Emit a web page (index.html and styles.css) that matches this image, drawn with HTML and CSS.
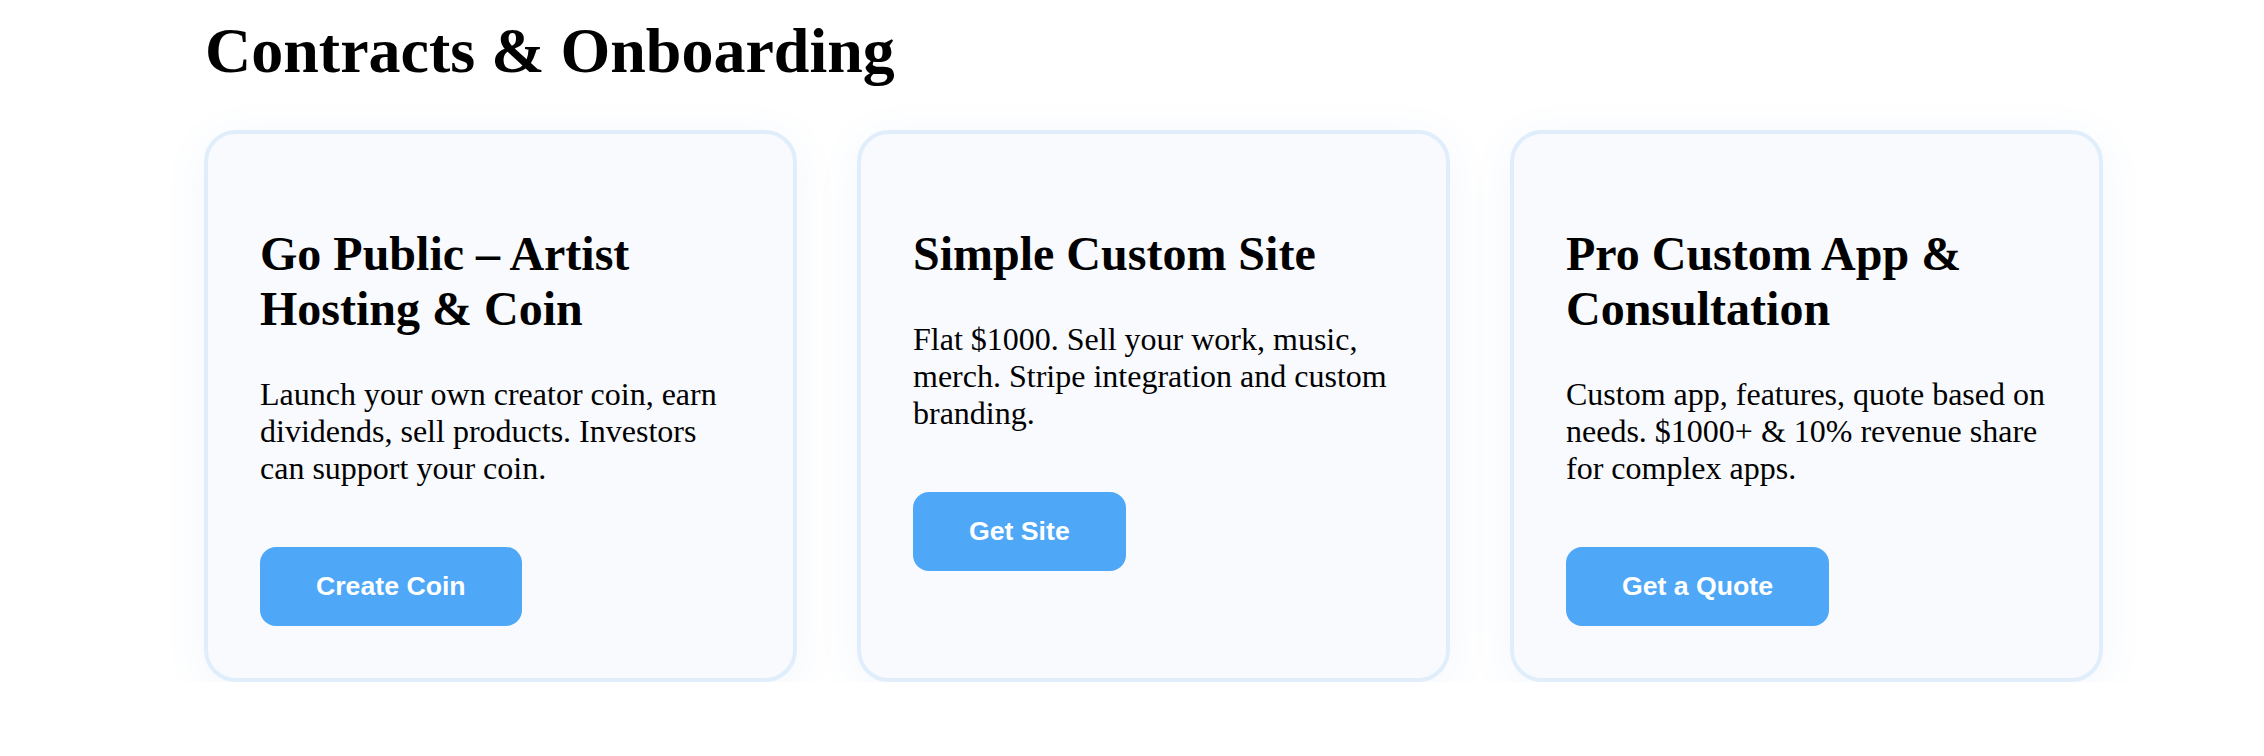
FILE: index.html
```html
<!DOCTYPE html>
<html lang="en">
<head>
<meta charset="utf-8">
<title>Contracts &amp; Onboarding</title>
<link rel="stylesheet" href="styles.css">
</head>
<body>
<section class="page">
  <h1 class="page-title">Contracts &amp; Onboarding</h1>
  <div class="cards">
    <div class="card">
      <h2 class="card-title">Go Public – Artist Hosting &amp; Coin</h2>
      <p class="card-text">Launch your own creator coin, earn dividends, sell products. Investors can support your coin.</p>
      <button class="card-btn">Create Coin</button>
    </div>
    <div class="card">
      <h2 class="card-title">Simple Custom Site</h2>
      <p class="card-text">Flat $1000. Sell your work, music, merch. Stripe integration and custom branding.</p>
      <button class="card-btn">Get Site</button>
    </div>
    <div class="card">
      <h2 class="card-title">Pro Custom App &amp; Consultation</h2>
      <p class="card-text">Custom app, features, quote based on needs. $1000+ &amp; 10% revenue share for complex apps.</p>
      <button class="card-btn">Get a Quote</button>
    </div>
  </div>
</section>
</body>
</html>
```
FILE: styles.css
```css
html, body {
  margin: 0;
  padding: 0;
  background: #ffffff;
}
body {
  font-family: "Liberation Serif", "Times New Roman", serif;
  color: #000000;
}
.page {
  padding: 0 161px 0 204px;
}
.page-title {
  font-size: 64px;
  font-weight: bold;
  line-height: normal;
  margin: 14px 0 42px 1px;
}
.cards {
  display: grid;
  grid-template-columns: repeat(3, 1fr);
  gap: 60px;
}
.card {
  background: #f8fafe;
  border: 4px solid #e0eefc;
  border-radius: 32px;
  padding: 52px;
  box-shadow: 0 8px 44px rgba(70, 130, 210, 0.07);
}
.card-title {
  font-size: 48px;
  font-weight: bold;
  line-height: normal;
  margin: 40px 0;
}
.card-text {
  font-size: 32px;
  line-height: normal;
  margin: 40px 0 0;
}
.card-btn {
  display: block;
  margin-top: 60px;
  padding: 24px 56px;
  border: none;
  border-radius: 16px;
  background: #4ea8f7;
  color: #ffffff;
  font-family: "Liberation Sans", Arial, Helvetica, sans-serif;
  font-weight: bold;
  font-size: 26.67px;
  line-height: normal;
  cursor: pointer;
}
```
